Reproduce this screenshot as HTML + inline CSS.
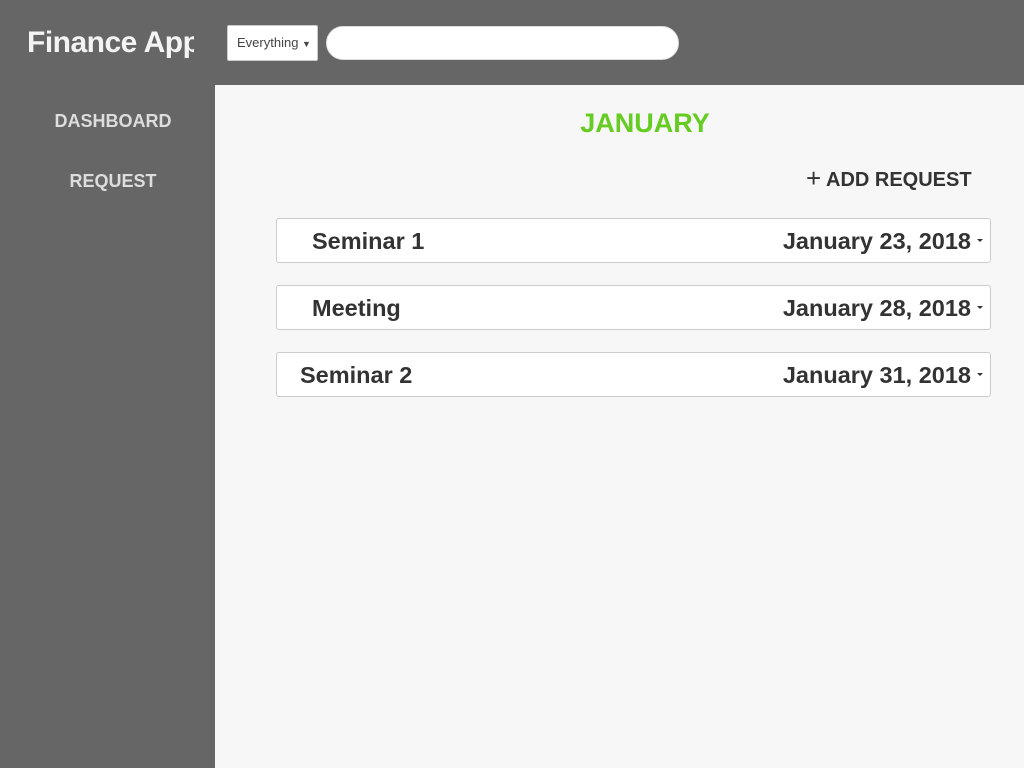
<!DOCTYPE html>
<html><head><style>
body{margin:0;width:1024px;height:768px;background:#666;font-family:"Liberation Sans",sans-serif;position:relative;overflow:hidden}
.abs{position:absolute}
.title{left:27px;top:26px;width:167px;overflow:hidden;white-space:nowrap;color:#f4f4f4;font-size:30px;font-weight:bold;letter-spacing:-0.5px}
.sel{left:227px;top:25px;background:#fff;border:1px solid #ccc;border-radius:2px;font-size:13px;color:#444;line-height:34px;box-sizing:border-box;padding-left:9px;width:91px;height:36px}
.search{left:326px;top:26px;width:353px;height:34px;background:#fff;border-radius:17px;box-sizing:border-box;border:1px solid #ddd}
.nav{color:#ddd;font-weight:bold;font-size:18px;width:226px;text-align:center}
.main{left:215px;top:85px;width:809px;height:683px;background:#f7f7f7}
.jan{left:215px;width:860px;top:108px;text-align:center;color:#66cc22;font-weight:bold;font-size:27px}
.add{left:806px;top:162px;width:166px;overflow:hidden;font-weight:bold;font-size:20px;color:#333;white-space:nowrap}
.row{left:276px;width:715px;height:45px;background:#fff;border:1px solid #ccc;border-radius:3px;box-sizing:border-box;font-weight:bold;font-size:23.5px;color:#333}
.row .n{position:absolute;top:9px}
.row .d{position:absolute;right:19px;top:9px}
.row .c{position:absolute;right:7px;top:20px;width:0;height:0;border-left:3px solid transparent;border-right:3px solid transparent;border-top:3px solid #333}
</style></head><body>
<div class="abs title">Finance App</div>
<div class="abs sel">Everything <span style="font-size:9px">▼</span></div>
<div class="abs search"></div>
<div class="abs nav" style="top:111px">DASHBOARD</div>
<div class="abs nav" style="top:171px">REQUEST</div>
<div class="abs main"></div>
<div class="abs jan">JANUARY</div>
<div class="abs add"><span style="font-weight:normal;font-size:26px;position:relative;top:1px">+</span> ADD REQUEST</div>
<div class="abs row" style="top:218px"><span class="n" style="left:35px">Seminar 1</span><span class="d">January 23, 2018</span><span class="c"></span></div>
<div class="abs row" style="top:285px"><span class="n" style="left:35px">Meeting</span><span class="d">January 28, 2018</span><span class="c"></span></div>
<div class="abs row" style="top:352px"><span class="n" style="left:23px">Seminar 2</span><span class="d">January 31, 2018</span><span class="c"></span></div>
</body></html>
